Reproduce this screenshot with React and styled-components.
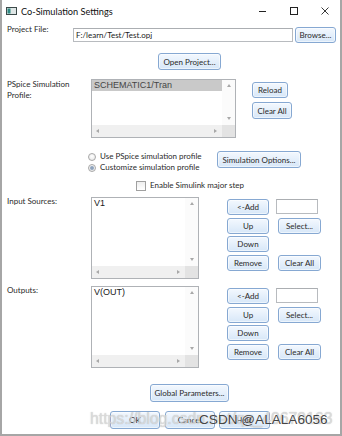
import React from 'react';
import styled, { createGlobalStyle } from 'styled-components';

const UI = `Lato, "Noto Sans", sans-serif`;
const LIST = `"Liberation Sans", Arial, sans-serif`;

const Global = createGlobalStyle`
  html, body { margin: 0; padding: 0; background: #fff; }
  body { width: 342px; height: 436px; overflow: hidden; }
  * { box-sizing: border-box; }
`;

const Window = styled.div`
  position: relative;
  width: 342px;
  height: 436px;
  background: #fff;
  border: 2px solid #a6a6a6;
  border-top: none;
  font-family: ${UI};
  font-size: 8px;
  color: #2a2a2a;
  display: flex;
  flex-direction: column;
  overflow: hidden;
`;

const TitleBar = styled.div`
  height: 22px;
  display: flex;
  align-items: center;
  padding-left: 4px;
`;

const AppIcon = () => (
  <svg width="11" height="8" viewBox="0 0 11 8">
    <rect x="0.5" y="0.5" width="10" height="7" fill="#dfe6e6" stroke="#3c4a4a" />
    <rect x="1.5" y="1.5" width="3" height="5" fill="#2f8a84" />
  </svg>
);

const Title = styled.span`
  margin-left: 4px;
  font-size: 9.2px;
  color: #111;
  flex: 1;
`;

const Controls = styled.div`
  display: flex;
  height: 22px;
`;

const Ctrl = styled.div`
  width: 31px;
  height: 22px;
  display: flex;
  align-items: center;
  justify-content: center;
`;

const Body = styled.div`
  display: flex;
  flex-direction: column;
  padding-left: 5px;
`;

const Row = styled.div`
  display: flex;
  align-items: flex-start;
  margin-top: ${p => p.$mt || 0}px;
  padding-left: ${p => p.$pl || 0}px;
  gap: ${p => p.$gap || 0}px;
`;

const Label = styled.div`
  width: ${p => p.$w}px;
  flex: none;
  line-height: 11px;
  margin-top: ${p => p.$mt || 0}px;
  color: #2a2a2a;
`;

const TextField = styled.div`
  width: ${p => p.$w}px;
  height: ${p => p.$h || 14}px;
  margin-top: ${p => p.$mt || 0}px;
  margin-left: ${p => p.$ml || 0}px;
  border: 1px solid #b8bbbf;
  border-top-color: #abaeb2;
  background: #fff;
  padding-left: 2px;
  line-height: 12px;
  color: #1a1a1a;
  white-space: nowrap;
  overflow: hidden;
`;

const Button = styled.button`
  width: ${p => p.$w}px;
  height: ${p => p.$h || 16}px;
  margin-left: ${p => p.$ml || 0}px;
  margin-top: ${p => p.$mt || 0}px;
  padding: 0;
  font-family: ${UI};
  font-size: 8px;
  color: #2a2a2a;
  border: 1px solid #86a8d2;
  border-radius: 3px;
  background: linear-gradient(#f3f8fe, #d7e7f8);
  box-shadow: inset 0 0 0 1px rgba(255, 255, 255, 0.55);
  white-space: nowrap;
  flex: none;
`;

const ListFrame = styled.div`
  width: ${p => p.$w}px;
  height: ${p => p.$h}px;
  flex: none;
  border: 1px solid #afb2b6;
  background: #fff;
  display: grid;
  grid-template-columns: 1fr 13px;
  grid-template-rows: 1fr 12px;
`;

const ListContent = styled.div`
  overflow: hidden;
  font-family: ${LIST};
  font-size: 9px;
  line-height: 11px;
  color: #1a1a1a;
`;

const ListItem = styled.div`
  padding-left: 2px;
  height: 11px;
  white-space: nowrap;
  background: ${p => (p.$selected ? '#c9c9c9' : 'transparent')};
  color: ${p => (p.$selected ? '#454545' : '#1a1a1a')};
`;

const VTrack = styled.div`
  background: #fbfbfb;
  display: flex;
  flex-direction: column;
  justify-content: space-between;
  align-items: center;
  padding: 4px 0 5px;
`;

const HTrack = styled.div`
  background: #f0f0f0;
  display: flex;
  justify-content: space-between;
  align-items: center;
  padding: 0 5px 0 4px;
`;

const Corner = styled.div`
  background: #e3e3e3;
`;

const Arrow = styled.span`
  width: 0;
  height: 0;
  border-style: solid;
  border-color: transparent;
  ${p => p.$dir === 'up' && `border-width: 0 2.5px 3px 2.5px; border-bottom-color: #a8a8a8;`}
  ${p => p.$dir === 'down' && `border-width: 3px 2.5px 0 2.5px; border-top-color: #a8a8a8;`}
  ${p => p.$dir === 'left' && `border-width: 2.5px 3px 2.5px 0; border-right-color: #a8a8a8;`}
  ${p => p.$dir === 'right' && `border-width: 2.5px 0 2.5px 3px; border-left-color: #a8a8a8;`}
`;

const ListBox = ({ w, h, items, selected }) => (
  <ListFrame $w={w} $h={h}>
    <ListContent>
      {items.map((it, i) => (
        <ListItem key={i} $selected={selected === i}>{it}</ListItem>
      ))}
    </ListContent>
    <VTrack>
      <Arrow $dir="up" />
      <Arrow $dir="down" />
    </VTrack>
    <HTrack>
      <Arrow $dir="left" />
      <Arrow $dir="right" />
    </HTrack>
    <Corner />
  </ListFrame>
);

const ButtonCol = styled.div`
  display: flex;
  flex-direction: column;
  align-items: flex-start;
  gap: 4px;
  margin-left: ${p => p.$ml}px;
  padding-top: ${p => p.$pt}px;
`;

const RadioGroup = styled.div`
  width: 129px;
  flex: none;
  display: flex;
  flex-direction: column;
`;

const RadioRow = styled.label`
  display: flex;
  align-items: center;
  height: 11px;
  gap: 4px;
  line-height: 11px;
  color: #2a2a2a;
`;

const RadioCircle = styled.span`
  position: relative;
  width: 8px;
  height: 8px;
  border-radius: 50%;
  border: 1px solid #a8a8a8;
  background: radial-gradient(circle at 50% 40%, #ffffff 0%, #e4e4e4 100%);
  flex: none;
  &::after {
    content: '';
    display: ${p => (p.$checked ? 'block' : 'none')};
    position: absolute;
    left: 1px;
    top: 1px;
    width: 4px;
    height: 4px;
    border-radius: 50%;
    background: #8ea3bd;
  }
`;

const CheckRow = styled.label`
  display: flex;
  align-items: center;
  gap: 4px;
  height: 11px;
  line-height: 11px;
  margin-top: ${p => p.$mt}px;
  padding-left: ${p => p.$pl}px;
  color: #2a2a2a;
`;

const CheckBox = styled.span`
  width: 10px;
  height: 10px;
  border: 1px solid #a0a0a0;
  background: linear-gradient(#eeeeee, #ffffff);
  flex: none;
`;

const SideGrid = styled.div`
  display: grid;
  grid-template-columns: 42px 52px;
  grid-auto-rows: 16px;
  column-gap: 7px;
  row-gap: 2.7px;
  margin-left: 28px;
  padding-top: 2px;
`;

const Watermark = styled.div`
  position: absolute;
  left: ${p => p.$x}px;
  top: ${p => p.$y}px;
  font-family: ${LIST};
  font-size: ${p => p.$size}px;
  line-height: 1;
  white-space: nowrap;
  pointer-events: none;
  color: ${p => p.$color};
  text-shadow: ${p => p.$shadow};
`;

const SourceBlock = ({ label, item, mt }) => (
  <Row $mt={mt}>
    <Label $w={84} $mt={-1}>{label}</Label>
    <ListBox w={108} h={82} items={[item]} />
    <SideGrid>
      <Button $w={42}>{'<-Add'}</Button>
      <TextField $w={42} $h={15} />
      <Button $w={42}>Up</Button>
      <Button $w={43} $ml={2}>Select...</Button>
      <Button $w={42}>Down</Button>
      <span />
      <Button $w={42}>Remove</Button>
      <Button $w={43} $ml={2}>Clear All</Button>
    </SideGrid>
  </Row>
);

export default function App() {
  return (
    <>
      <Global />
      <Window>
        <TitleBar>
          <AppIcon />
          <Title>Co-Simulation Settings</Title>
          <Controls>
            <Ctrl>
              <svg width="7" height="7" viewBox="0 0 7 7"><line x1="0" y1="3.5" x2="7" y2="3.5" stroke="#222" strokeWidth="1" /></svg>
            </Ctrl>
            <Ctrl>
              <svg width="8" height="8" viewBox="0 0 8 8"><rect x="0.5" y="0.5" width="7" height="7" fill="none" stroke="#222" strokeWidth="1" /></svg>
            </Ctrl>
            <Ctrl>
              <svg width="8" height="8" viewBox="0 0 8 8"><path d="M0.5 0.5 L7.5 7.5 M7.5 0.5 L0.5 7.5" stroke="#222" strokeWidth="0.9" /></svg>
            </Ctrl>
          </Controls>
        </TitleBar>

        <Body>
          <Row $mt={5}>
            <Label $w={66} $mt={-3}>Project File:</Label>
            <TextField $w={220} $mt={1}>F:/learn/Test/Test.opj</TextField>
            <Button $w={41} $ml={2}>Browse...</Button>
          </Row>

          <Row $mt={10} $pl={151}>
            <Button $w={63} $h={17}>Open Project...</Button>
          </Row>

          <Row $mt={9}>
            <Label $w={84} $mt={0}>PSpice Simulation<br />Profile:</Label>
            <ListBox w={145} h={59} items={['SCHEMATIC1/Tran']} selected={0} />
            <ButtonCol $ml={16} $pt={3}>
              <Button $w={36}>Reload</Button>
              <Button $w={40} $h={17}>Clear All</Button>
            </ButtonCol>
          </Row>

          <Row $mt={13} $pl={81}>
            <RadioGroup>
              <RadioRow><RadioCircle />Use PSpice simulation profile</RadioRow>
              <RadioRow><RadioCircle $checked />Customize simulation profile</RadioRow>
            </RadioGroup>
            <Button $w={84} $h={17}>Simulation Options...</Button>
          </Row>

          <CheckRow $mt={7} $pl={129}>
            <CheckBox />Enable Simulink major step
          </CheckRow>

          <SourceBlock label="Input Sources:" item="V1" mt={6} />
          <SourceBlock label="Outputs:" item="V(OUT)" mt={7} />

          <Row $mt={16} $pl={143}>
            <Button $w={79} $h={18}>Global Parameters...</Button>
          </Row>

          <Row $mt={9} $pl={103} $gap={4.5}>
            <Button $w={50} $h={18}>OK</Button>
            <Button $w={50} $h={18}>Cancel</Button>
            <Button $w={51} $h={18}>Help</Button>
          </Row>
        </Body>

        <Watermark $x={88} $y={411} $size={15.8} $color="rgba(224,224,224,0.8)" $shadow="0 0 1px rgba(120,120,120,0.5)">
          https://blog.csdn.net/qq_40679163
        </Watermark>
        <Watermark $x={197} $y={413} $size={13.6} $color="rgba(45,45,45,0.9)" $shadow="0 0 1px rgba(255,255,255,0.8)">
          CSDN @ALALA6056
        </Watermark>
      </Window>
    </>
  );
}
